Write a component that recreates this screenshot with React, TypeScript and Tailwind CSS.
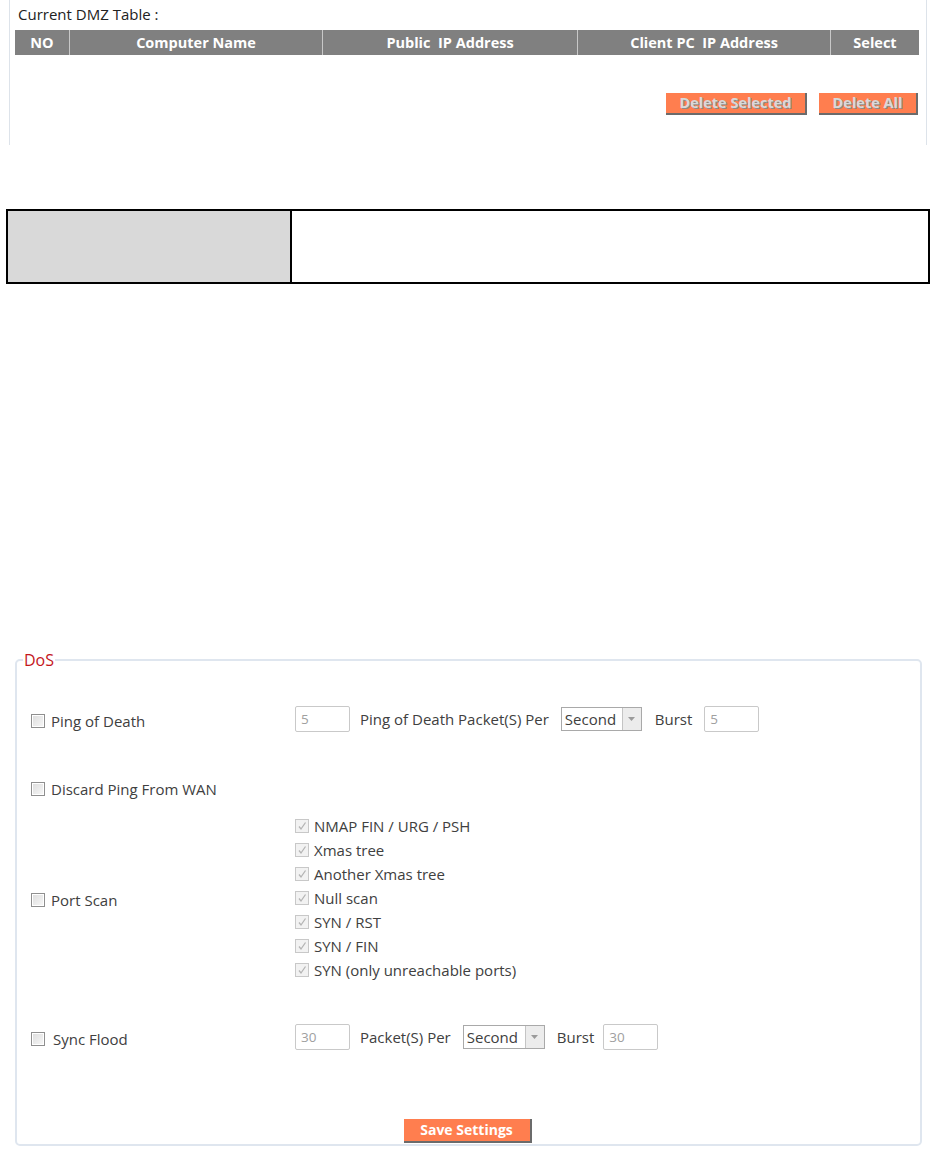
import React from "react";

const Box = ({ checked = false, disabled = false }: { checked?: boolean; disabled?: boolean }) => (
  <span
    className={
      "inline-flex h-[14px] w-[14px] shrink-0 items-center justify-center border " +
      (disabled
        ? "border-[#c8c8c8] bg-[#f2f2f2]"
        : "border-[#8f8f8f] bg-gradient-to-br from-[#dcdcdc] to-[#f8f8f8] shadow-[inset_0_0_0_1px_#ffffff]")
    }
  >
    {checked && (
      <svg width="10" height="10" viewBox="0 0 10 10">
        <path d="M2 5.5 L4 8 L8.5 1.5" fill="none" stroke="#b4b4b4" strokeWidth="1.3" />
      </svg>
    )}
  </span>
);

const SmallInput = ({ value, w = "w-[55px]" }: { value: string; w?: string }) => (
  <div className={`flex h-[26px] ${w} items-center rounded-[2px] border border-[#c9c9c9] bg-white px-[5px] text-[13.5px] text-[#a0a0a0]`}>
    {value}
  </div>
);

const Select = ({ w }: { w: string }) => (
  <div className={`flex h-[24px] ${w} items-stretch border border-[#a9a9a9] bg-white`}>
    <span className="flex flex-1 items-center pl-[3px] text-[#404040]">Second</span>
    <span className="flex w-[19px] items-center justify-center border-l border-[#c4c4c4] bg-[#ececec]">
      <svg width="7" height="4" viewBox="0 0 7 4">
        <path d="M0 0 H7 L3.5 4 Z" fill="#9a9a9a" />
      </svg>
    </span>
  </div>
);

const OrangeButton = ({ label, w, muted = false }: { label: string; w: string; muted?: boolean }) => (
  <div
    className={`flex ${w} items-center justify-center border-b-2 border-r-2 border-[#6b6b6b] bg-[#ff7e4f] font-bold ${
      muted ? "h-[22px] text-[14.5px] text-[#d8d8d8] [text-shadow:1px_1px_0_#8a8a8a]" : "h-[24px] text-[14px] text-white"
    }`}
  >
    {label}
  </div>
);

const scanItems = [
  "NMAP FIN / URG / PSH",
  "Xmas tree",
  "Another Xmas tree",
  "Null scan",
  "SYN / RST",
  "SYN / FIN",
  "SYN (only unreachable ports)",
];

export default function App() {
  return (
    <div className="h-[1160px] w-[935px] bg-white font-['Open_Sans',sans-serif] text-[15px] text-[#404040]">
      {/* DMZ table */}
      <section className="ml-[9px] mr-[8px] h-[145px] border-x border-[#dde3ea] pl-[5px] pr-[7px]">
        <div className="pl-[3px] pt-[4px] leading-[21px] text-[#222]">Current DMZ Table :</div>
        <div className="mt-[5px] flex h-[25px] bg-[#808080] text-[14.5px] font-bold text-white">
          <div className="flex w-[54px] items-center justify-center">NO</div>
          <div className="flex w-[253px] items-center justify-center border-l border-[#c8c8c8]">Computer Name</div>
          <div className="flex w-[255px] items-center justify-center border-l border-[#c8c8c8]">Public&nbsp; IP Address</div>
          <div className="flex w-[253px] items-center justify-center border-l border-[#c8c8c8]">Client PC&nbsp; IP Address</div>
          <div className="flex flex-1 items-center justify-center border-l border-[#c8c8c8]">Select</div>
        </div>
        <div className="mt-[38px] flex justify-end gap-[12px] pr-[1px]">
          <OrangeButton label="Delete Selected" w="w-[141px]" muted />
          <OrangeButton label="Delete All" w="w-[99px]" muted />
        </div>
      </section>

      {/* empty description table */}
      <div className="ml-[6px] mt-[64px] flex h-[75px] w-[924px] border-2 border-black">
        <div className="w-[284px] border-r-2 border-black bg-[#d9d9d9]" />
        <div className="flex-1 bg-white" />
      </div>

      {/* DoS fieldset */}
      <fieldset className="ml-[15px] mt-[368px] h-[494px] w-[907px] rounded-[5px] border-2 border-[#dfe6ef] pl-[14px]">
        <legend className="-ml-[8px] px-[1px] text-[16px] leading-[16px] text-[#c4161c]">DoS</legend>

        <div className="mt-[38px] flex items-center">
          <div className="flex w-[264px] items-center gap-[6px] pt-[4px]">
            <Box />
            <span>Ping of Death</span>
          </div>
          <SmallInput value="5" />
          <span className="ml-[10px]">Ping of Death Packet(S) Per</span>
          <div className="ml-[12px]">
            <Select w="w-[81px]" />
          </div>
          <span className="ml-[13px]">Burst</span>
          <div className="ml-[12px]">
            <SmallInput value="5" />
          </div>
        </div>

        <div className="mt-[45px] flex items-center gap-[6px]">
          <Box />
          <span>Discard Ping From WAN</span>
        </div>

        <div className="mt-[14px] flex items-center">
          <div className="flex w-[264px] items-center gap-[6px] pt-[4px]">
            <Box />
            <span>Port Scan</span>
          </div>
          <div className="flex flex-col">
            {scanItems.map((s) => (
              <div key={s} className="flex h-[24px] items-center gap-[5px]">
                <Box checked disabled />
                <span>{s}</span>
              </div>
            ))}
          </div>
        </div>

        <div className="mt-[42px] flex items-center">
          <div className="flex w-[264px] items-center gap-[8px] pt-[4px]">
            <Box />
            <span>Sync Flood</span>
          </div>
          <SmallInput value="30" />
          <span className="ml-[10px]">Packet(S) Per</span>
          <div className="ml-[12px]">
            <Select w="w-[82px]" />
          </div>
          <span className="ml-[12px]">Burst</span>
          <div className="ml-[9px]">
            <SmallInput value="30" />
          </div>
        </div>

        <div className="mt-[68px] flex justify-center pr-[16px]">
          <OrangeButton label="Save Settings" w="w-[128px]" />
        </div>
      </fieldset>
    </div>
  );
}
